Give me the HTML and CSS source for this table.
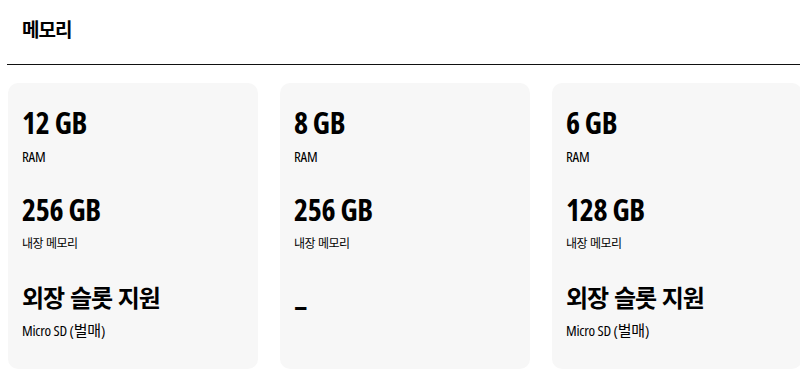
FILE: index.html
```html
<!DOCTYPE html>
<html lang="ko">
<head>
<meta charset="utf-8">
<link rel="stylesheet" href="styles.css">
</head>
<body>
<section class="memory">
  <header class="head">
    <h2 class="title">메모리</h2>
  </header>
  <div class="cards">
    <div class="card">
      <div class="spec">
        <div class="value">12 GB</div>
        <div class="label">RAM</div>
      </div>
      <div class="spec">
        <div class="value">256 GB</div>
        <div class="label ko">내장 메모리</div>
      </div>
      <div class="spec">
        <div class="value ko">외장 슬롯 지원</div>
        <div class="label">Micro SD (벌매)</div>
      </div>
    </div>
    <div class="card">
      <div class="spec">
        <div class="value">8 GB</div>
        <div class="label">RAM</div>
      </div>
      <div class="spec">
        <div class="value">256 GB</div>
        <div class="label ko">내장 메모리</div>
      </div>
      <div class="spec">
        <div class="value dash">–</div>
      </div>
    </div>
    <div class="card">
      <div class="spec">
        <div class="value">6 GB</div>
        <div class="label">RAM</div>
      </div>
      <div class="spec">
        <div class="value">128 GB</div>
        <div class="label ko">내장 메모리</div>
      </div>
      <div class="spec">
        <div class="value ko">외장 슬롯 지원</div>
        <div class="label">Micro SD (벌매)</div>
      </div>
    </div>
  </div>
</section>
</body>
</html>
```

FILE: styles.css
```css
* { box-sizing: border-box; }
html, body { margin: 0; padding: 0; background: #ffffff; }
body {
  font-family: Roboto, "Noto Sans CJK KR", sans-serif;
  color: #000;
  width: 800px;
  overflow: hidden;
}
.head {
  margin-left: 7px;
  height: 65px;
  border-bottom: 1px solid #111;
  padding: 15px 0 0 15px;
}
.title {
  margin: 0;
  font-family: "Noto Sans CJK KR", sans-serif;
  font-size: 19px;
  line-height: 28px;
  font-weight: 700;
  letter-spacing: -1px;
}
.cards {
  display: grid;
  grid-template-columns: 250px 250px 250px;
  column-gap: 22px;
  padding: 18px 0 0 8px;
}
.card {
  background: #f7f7f7;
  border-radius: 10px;
  height: 286px;
  padding: 21px 14px;
}
.spec { margin-bottom: 26px; }
.value {
  font-family: "Open Sans", Roboto, sans-serif;
  font-stretch: 75%;
  font-size: 30px;
  line-height: 38px;
  font-weight: 700;
  letter-spacing: -0.3px;
}
.value.ko {
  font-family: "Noto Sans CJK KR", sans-serif;
  font-stretch: normal;
  font-size: 24px;
  letter-spacing: -1px;
}
.value.dash {
  padding-top: 9px;
  font-stretch: normal;
  font-size: 27px;
}
.label {
  margin-top: 5px;
  font-family: "Open Sans", Roboto, "Noto Sans CJK KR", sans-serif;
  font-stretch: 75%;
  font-size: 15px;
  line-height: 18px;
  letter-spacing: -0.2px;
}
.label.ko {
  font-family: "Noto Sans CJK KR", sans-serif;
  font-stretch: normal;
  font-size: 12px;
  letter-spacing: -0.5px;
}
```
